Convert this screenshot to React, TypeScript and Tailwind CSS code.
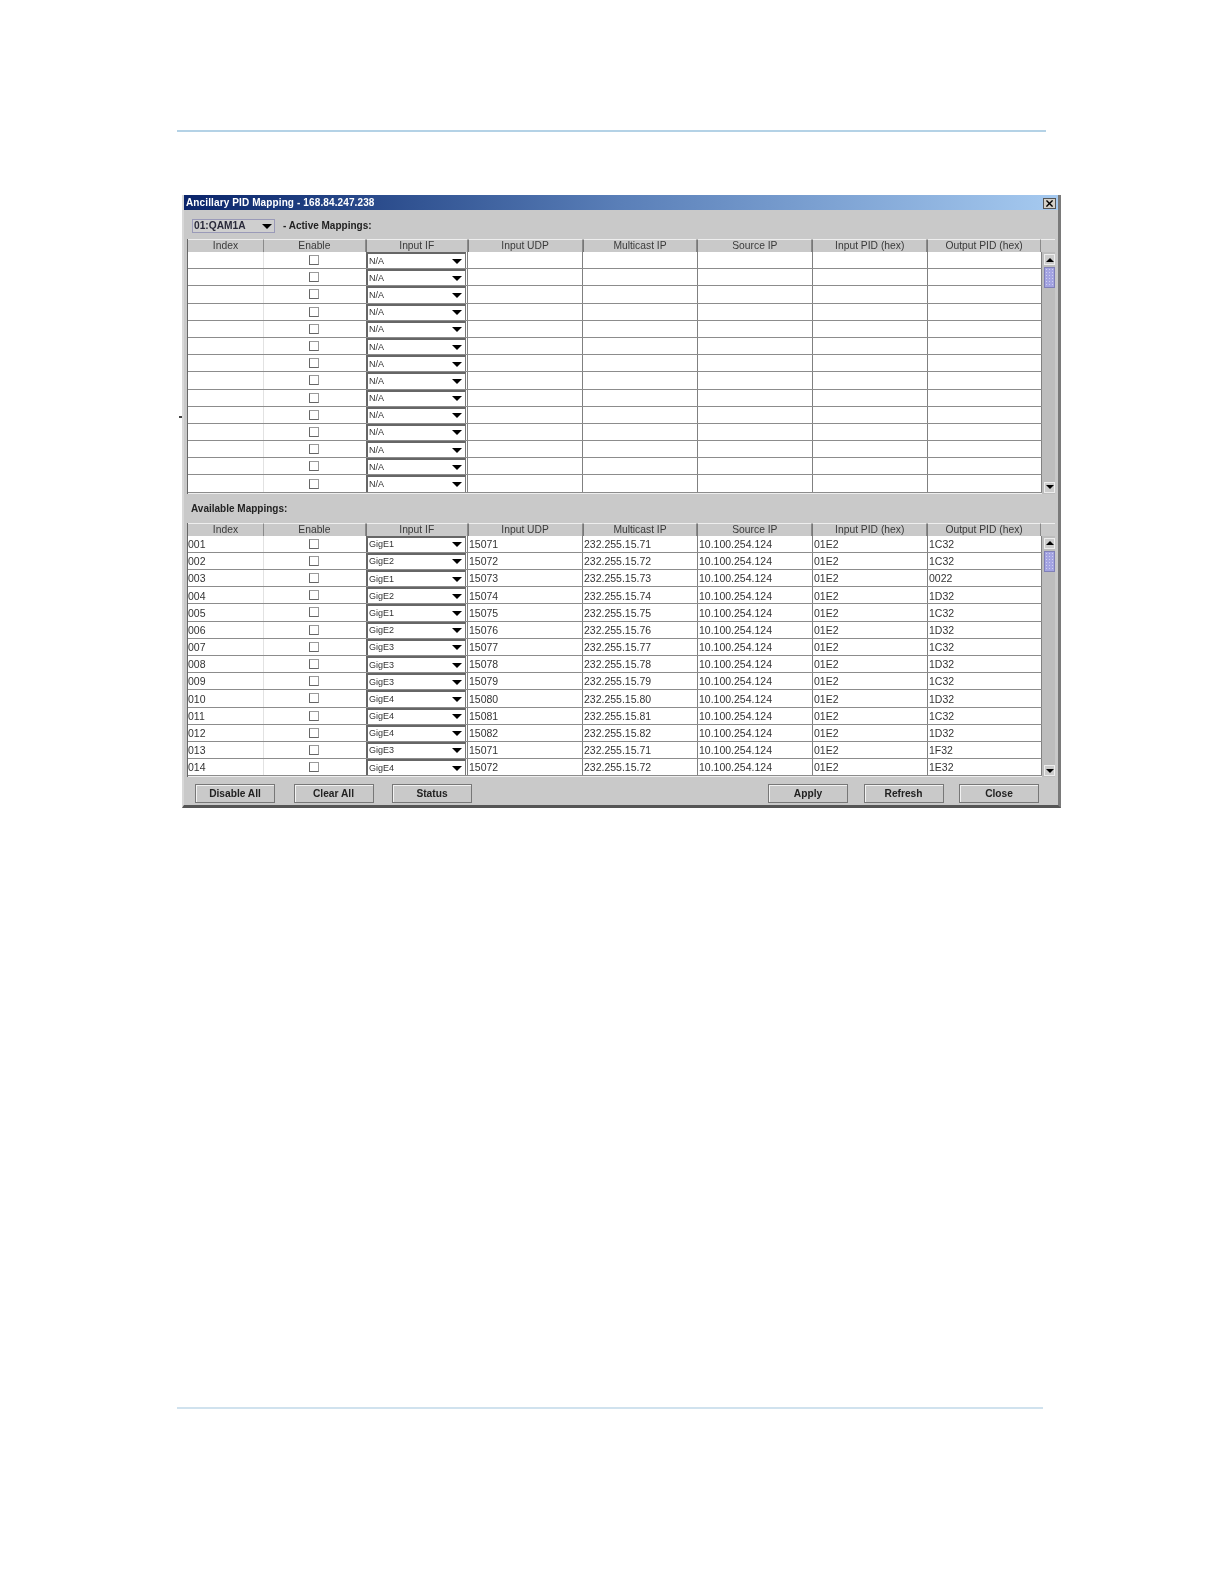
const widths = ["w-[76px]", "w-[102px]", "w-[102px]", "w-[115px]", "w-[115px]", "w-[115px]", "w-[115px]", "w-[114px]"];
const headers = ["Index", "Enable", "Input IF", "Input UDP", "Multicast IP", "Source IP", "Input PID (hex)", "Output PID (hex)"];

type Row = { index: string; input: string; udp: string; ip: string; src: string; pid: string; out: string };

const activeRows: Row[] = Array.from({ length: 14 }, () => ({ index: "", input: "N/A", udp: "", ip: "", src: "", pid: "", out: "" }));

const avail: [string, string, string, string][] = [
  ["GigE1", "15071", "71", "1C32"],
  ["GigE2", "15072", "72", "1C32"],
  ["GigE1", "15073", "73", "0022"],
  ["GigE2", "15074", "74", "1D32"],
  ["GigE1", "15075", "75", "1C32"],
  ["GigE2", "15076", "76", "1D32"],
  ["GigE3", "15077", "77", "1C32"],
  ["GigE3", "15078", "78", "1D32"],
  ["GigE3", "15079", "79", "1C32"],
  ["GigE4", "15080", "80", "1D32"],
  ["GigE4", "15081", "81", "1C32"],
  ["GigE4", "15082", "82", "1D32"],
  ["GigE3", "15071", "71", "1F32"],
  ["GigE4", "15072", "72", "1E32"],
];
const availRows: Row[] = avail.map((r, i) => ({
  index: String(i + 1).padStart(3, "0"),
  input: r[0],
  udp: r[1],
  ip: `232.255.15.${r[2]}`,
  src: "10.100.254.124",
  pid: "01E2",
  out: r[3],
}));

function Arrow({ up = false, className = "" }: { up?: boolean; className?: string }) {
  return (
    <svg viewBox="0 0 10 5" className={className}>
      <path d={up ? "M0 5 L5 0 L10 5 Z" : "M0 0 L10 0 L5 5 Z"} fill="#000" />
    </svg>
  );
}

function Header() {
  return (
    <div className="flex h-[13px]">
      {headers.map((h, i) => (
        <div
          key={h}
          className={`${widths[i]} flex items-center justify-center border-t border-r border-t-[#eeeeee] border-r-[#8a8a8a] bg-[#c9c9c9] pt-[1px] text-[10.3px] leading-none text-[#3a3a3a] ${i >= 2 ? "border-l border-l-[#777777]" : ""}`}
        >
          {h}
        </div>
      ))}
      <div className="w-[14px] border-t border-t-[#eeeeee] bg-[#c9c9c9]" />
    </div>
  );
}

function TableRow({ row }: { row: Row }) {
  const text = "flex items-center border-r border-r-[#808080] pt-[1px] pl-[1px] text-[10.5px] leading-none text-[#333333]";
  return (
    <div className="flex h-[17.2px] border-b border-b-[#8c8c8c] bg-white">
      <div className={`${widths[0]} flex items-center border-r border-r-[#e2e2e2] pt-[1px] text-[10.5px] leading-none text-[#333333]`}>{row.index}</div>
      <div className={`${widths[1]} flex items-center justify-center pr-[2px]`}>
        <div className="h-[10px] w-[10px] border border-[#9a9a9a] border-b-[#666666] border-l-[#666666] bg-white" />
      </div>
      <div className={`${widths[2]} h-full border-r border-r-[#808080] pr-[1px]`}>
        <div className="flex h-full items-center justify-between border-t-2 border-r border-l-2 border-t-[#666666] border-r-[#777777] border-l-[#666666] pr-[3px] pl-[1px] text-[9px] leading-none text-[#333333]">
          <span>{row.input}</span>
          <Arrow className="h-[5px] w-[10px]" />
        </div>
      </div>
      <div className={`${widths[3]} ${text}`}>{row.udp}</div>
      <div className={`${widths[4]} ${text}`}>{row.ip}</div>
      <div className={`${widths[5]} ${text}`}>{row.src}</div>
      <div className={`${widths[6]} ${text}`}>{row.pid}</div>
      <div className={`${widths[7]} ${text}`}>{row.out}</div>
    </div>
  );
}

function Scrollbar() {
  return (
    <div className="flex w-[14px] flex-col items-center justify-between bg-[#bdbdbd] pt-[2px] pb-[1px] pl-[2px]">
      <div className="w-full">
        <div className="flex h-[11px] w-full items-center justify-center border border-[#eeeeee] bg-[#cccccc]">
          <Arrow up className="h-[4px] w-[8px]" />
        </div>
        <div className="mt-[2px] h-[21px] w-full border border-[#8080b8] bg-[#a4a4e2] bg-[radial-gradient(#d0d0f0_0.8px,transparent_0.8px)] bg-[length:3px_3px]" />
      </div>
      <div className="flex h-[11px] w-full items-center justify-center border border-[#eeeeee] bg-[#cccccc]">
        <Arrow className="h-[4px] w-[8px]" />
      </div>
    </div>
  );
}

function Table({ rows }: { rows: Row[] }) {
  return (
    <div className="mx-[3px] border-l border-l-[#666666]">
      <Header />
      <div className="flex">
        <div className="w-[854px]">
          {rows.map((r, i) => (
            <TableRow key={i} row={r} />
          ))}
          <div className="h-[1px] bg-[#eeeeee]" />
        </div>
        <Scrollbar />
      </div>
    </div>
  );
}

function Button({ label }: { label: string }) {
  return (
    <button className="flex h-[19px] w-[80px] items-center justify-center border border-[#777777] bg-[#c9c9c9] text-[10.2px] leading-none font-bold text-[#222222] shadow-[inset_1px_1px_0_#f2f2f2]">
      {label}
    </button>
  );
}

export default function App() {
  return (
    <div className="relative h-[1584px] w-[1224px] bg-white pt-[130px] [font-family:'Liberation_Sans',Arial,sans-serif]">
      <div className="ml-[177px] h-[2px] w-[869px] bg-[#b4d2e6]" />
      <div className="absolute top-[416px] left-[179px] h-[2px] w-[3px] bg-[#444444]" />

      <div className="mt-[63px] ml-[182px] h-[613px] w-[879px] border-r-[3px] border-b-[3px] border-l-2 border-r-[#7a7a7a] border-b-[#555555] border-l-[#d8d8d8] bg-[#c9c9c9] blur-[0.3px]">
        <div className="flex h-[15px] items-center justify-between bg-gradient-to-r from-[#0a246a] via-[#5a7fb8] to-[#a6caf0] pt-[1px] pr-[2px] pl-[2px]">
          <span className="text-[10px] leading-none font-bold tracking-[0.12px] text-white">Ancillary PID Mapping - 168.84.247.238</span>
          <div className="flex h-[11px] w-[13px] items-center justify-center border border-[#555555] bg-[#d4d0c8]">
            <svg viewBox="0 0 8 8" className="h-[7px] w-[7px]">
              <path d="M0.5 0.5 L7.5 7.5 M7.5 0.5 L0.5 7.5" stroke="#000" strokeWidth="1.6" />
            </svg>
          </div>
        </div>

        <div className="flex h-[29px] items-center pt-[3px] pl-[8px]">
          <div className="flex h-[14px] w-[83px] items-center justify-between border border-[#9a9ab8] bg-[#cfcfcf] pr-[2px] pl-[1px] text-[10.2px] leading-none font-bold text-[#2a2a3a]">
            <span>01:QAM1A</span>
            <Arrow className="h-[5px] w-[10px]" />
          </div>
          <span className="ml-[8px] text-[10px] leading-none font-bold text-[#222222]">- Active Mappings:</span>
        </div>

        <Table rows={activeRows} />

        <div className="flex h-[29px] items-center pt-[1px] pl-[7px] text-[10px] leading-none font-bold text-[#222222]">Available Mappings:</div>

        <Table rows={availRows} />

        <div className="mt-[7px] flex justify-between pr-[19px] pl-[11px]">
          <div className="flex gap-[18.5px]">
            <Button label="Disable All" />
            <Button label="Clear All" />
            <Button label="Status" />
          </div>
          <div className="flex gap-[15.5px]">
            <Button label="Apply" />
            <Button label="Refresh" />
            <Button label="Close" />
          </div>
        </div>
      </div>

      <div className="mt-[599px] ml-[177px] h-[2px] w-[866px] bg-[#d0e2ee]" />
    </div>
  );
}
